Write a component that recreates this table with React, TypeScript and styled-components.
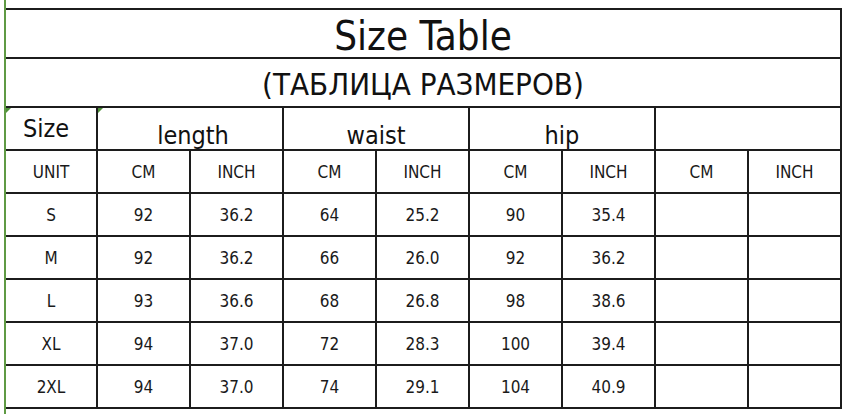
import React from "react";
import styled, { createGlobalStyle } from "styled-components";

type Row = [string, string, string, string, string, string, string];

const rows: Row[] = [
  ["S", "92", "36.2", "64", "25.2", "90", "35.4"],
  ["M", "92", "36.2", "66", "26.0", "92", "36.2"],
  ["L", "93", "36.6", "68", "26.8", "98", "38.6"],
  ["XL", "94", "37.0", "72", "28.3", "100", "39.4"],
  ["2XL", "94", "37.0", "74", "29.1", "104", "40.9"],
];

const units = ["UNIT", "CM", "INCH", "CM", "INCH", "CM", "INCH", "CM", "INCH"];

const App = () => {
  return (
    <Page>
      <GlobalStyle />
      <Stripe />
      <Sheet>
        <Grid>
          <TitleCell>Size Table</TitleCell>
          <SubtitleCell>(ТАБЛИЦА РАЗМЕРОВ)</SubtitleCell>

          <GroupCell $span={1} $align="center" $nudge={-5}>
            <Marker />
            Size
          </GroupCell>
          <GroupCell $span={2} $align="flex-end" $nudge={3}>
            <Marker />
            length
          </GroupCell>
          <GroupCell $span={2} $align="flex-end">
            waist
          </GroupCell>
          <GroupCell $span={2} $align="flex-end">
            hip
          </GroupCell>
          <GroupCell $span={2} $align="flex-end" />

          {units.map((u, i) => (
            <Cell key={"u" + i}>{u}</Cell>
          ))}

          {rows.map((r) => (
            <React.Fragment key={r[0]}>
              {r.map((v, i) => (
                <Cell key={i}>{v}</Cell>
              ))}
              <Cell />
              <Cell />
            </React.Fragment>
          ))}
        </Grid>
      </Sheet>
    </Page>
  );
};

export default App;

const GlobalStyle = createGlobalStyle`
  html, body {
    margin: 0;
    padding: 0;
    background: #ffffff;
  }
  body {
    font-family: "DejaVu Sans Condensed", "DejaVu Sans", sans-serif;
    color: #111;
  }
`;

const Page = styled.div`
  display: flex;
  width: 851px;
  height: 414px;
  overflow: hidden;
  padding-left: 4px;
  box-sizing: border-box;
`;

const Stripe = styled.div`
  width: 2px;
  height: 100%;
  background: #5f9a44;
  flex-shrink: 0;
`;

const Sheet = styled.div`
  padding-top: 8px;
`;

const Grid = styled.div`
  display: grid;
  grid-template-columns: 90px repeat(8, 91px);
  grid-template-rows: 47px 47px repeat(7, 41px);
  gap: 2px;
  padding: 2px 2px 2px 0;
  background: #1c1c1c;
`;

const Cell = styled.div`
  background: #fff;
  display: flex;
  align-items: center;
  justify-content: center;
  font-size: 17px;
  color: #1a1a1a;
`;

const TitleCell = styled(Cell)`
  grid-column: 1 / -1;
  font-size: 40px;
  padding-top: 4px;
  color: #111;
`;

const SubtitleCell = styled(Cell)`
  grid-column: 1 / -1;
  font-size: 31px;
  padding-top: 2px;
  color: #111;
`;

const GroupCell = styled(Cell)<{ $span: number; $align: string; $nudge?: number }>`
  position: relative;
  grid-column: span ${(p) => p.$span};
  align-items: ${(p) => p.$align};
  font-size: 25px;
  line-height: 1;
  padding-bottom: ${(p) => (p.$align === "flex-end" ? "1px" : "0")};
  padding-left: ${(p) => Math.max(0, (p.$nudge ?? 0) * 2)}px;
  padding-right: ${(p) => Math.max(0, -(p.$nudge ?? 0) * 2)}px;
  color: #111;
`;

const Marker = styled.span`
  position: absolute;
  left: 0;
  top: 0;
  width: 0;
  height: 0;
  border-top: 5px solid #4f8f3a;
  border-right: 5px solid transparent;
`;
